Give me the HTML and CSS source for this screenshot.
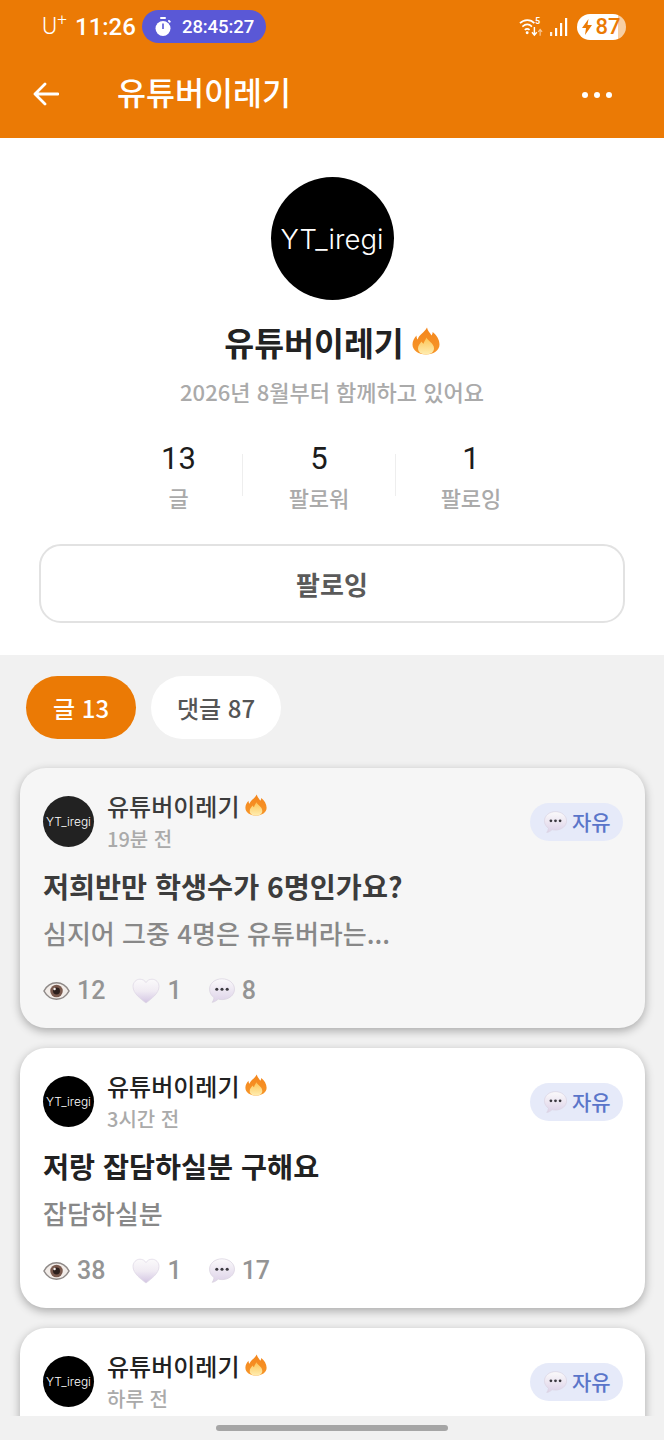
FILE: index.html
```html
<!DOCTYPE html>
<html lang="ko">
<head>
  <meta charset="UTF-8">
  <meta name="viewport" content="width=device-width, initial-scale=1.0">
  <title>유튜버이레기</title>
  <link rel="stylesheet" href="styles.css">
</head>
<body>
  <!-- icons used more than once -->
  <svg class="defs" aria-hidden="true">
    <defs>
      <linearGradient id="flameOuter" x1="0" y1="0" x2="0" y2="1">
        <stop offset="0" stop-color="#f4861c"/>
        <stop offset="1" stop-color="#f7962a"/>
      </linearGradient>
      <linearGradient id="flameInner" x1="0" y1="0" x2="0" y2="1">
        <stop offset="0" stop-color="#fcc455"/>
        <stop offset="1" stop-color="#ffedb0"/>
      </linearGradient>
      <linearGradient id="heartFill" x1="0" y1="0" x2="0" y2="1">
        <stop offset="0" stop-color="#fbfafb"/>
        <stop offset="0.5" stop-color="#f0ebf3"/>
        <stop offset="1" stop-color="#d3c5e3"/>
      </linearGradient>
      <linearGradient id="bubbleFill" x1="0" y1="0" x2="0" y2="1">
        <stop offset="0" stop-color="#fbfafb"/>
        <stop offset="1" stop-color="#ddd2e8"/>
      </linearGradient>
      <symbol id="flame" viewBox="0 0 28 28">
        <path fill="url(#flameOuter)" d="M15 .5c.5 3.500 3 5 4.500 8 .8-1 1.200-2.200 1.200-3.500C24.500 8 27.500 12.500 27.500 17.500 27.500 23.500 21.500 27.500 14 27.500S.5 23.500.5 17.500C.5 14 2.200 11 4.500 8.500c0 1.800.4 3 1.200 4C7 7.500 12 6 15 .5z"/>
        <path fill="url(#flameInner)" d="M14.500 10.500c1 3.200 7.500 5.500 7.500 11 0 3.800-3.500 6-8 6s-8-2.200-8-6c0-3.200 2.300-5 3.500-7 .5 1 1.200 1.800 2 2.300C12 14.500 13.500 12.800 14.500 10.500z"/>
      </symbol>
      <symbol id="bubble" viewBox="0.5 1.500 25 23.500">
        <path fill="url(#bubbleFill)" stroke="#d9d2df" stroke-width=".7" d="M13 2c6.600 0 12 4.300 12 10s-5.400 10-12 10c-1.300 0-2.500-.2-3.700-.5C7.800 23 6 24.300 3.500 24.600c1-1.200 1.700-2.700 1.800-4.500C2.700 18.200 1 15.300 1 12 1 6.300 6.400 2 13 2z"/>
        <circle cx="8" cy="12" r="1.500" fill="#3c3a40"/>
        <circle cx="13" cy="12" r="1.500" fill="#3c3a40"/>
        <circle cx="18" cy="12" r="1.500" fill="#3c3a40"/>
      </symbol>
      <symbol id="eye" viewBox="0 0 28 20">
        <path fill="#f2ece8" stroke="#8f8a88" stroke-width="1.600" d="M1 10C4 4.500 8.500 1.500 14 1.500S24 4.500 27 10c-3 5.500-7.500 8.500-13 8.500S4 15.500 1 10z"/>
        <circle cx="14" cy="10" r="6.500" fill="#7a5a4e"/>
        <circle cx="14" cy="10" r="3.600" fill="#2c1f1c"/>
        <circle cx="12" cy="8" r="1.300" fill="#f5f0ee"/>
      </symbol>
      <symbol id="heart" viewBox="0 0 28 26">
        <path fill="url(#heartFill)" stroke="#ddd6e4" stroke-width=".7" d="M14 25C9 21 1 15.500 1 8.500 1 4.300 4.200 1.200 8 1.200c2.500 0 4.700 1.200 6 3.400 1.300-2.200 3.500-3.400 6-3.400 3.800 0 7 3.100 7 7.300C27 15.500 19 21 14 25z"/>
      </symbol>
    </defs>
  </svg>

  <div class="page">
    <header class="appbar">
      <div class="statusbar">
        <div class="status-left">
          <span class="carrier">U<sup>+</sup></span>
          <span class="clock">11:26</span>
          <span class="timer">
            <svg class="timer-icon" viewBox="0 0 18 20"><rect x="6" y="0" width="6" height="2" rx="1" fill="#fff"/><rect x="14" y="3" width="3" height="2" rx="1" fill="#fff" transform="rotate(40 15 4)"/><circle cx="9" cy="11.500" r="7.500" fill="#fff"/><rect x="8.200" y="6.500" width="1.600" height="5.500" fill="#5a58d6"/></svg>
            28:45:27
          </span>
        </div>
        <div class="status-right">
          <svg class="wifi-icon" viewBox="0 0 26 22" fill="none" stroke="#fff"><path stroke-width="1.700" d="M1 7c4-4 11-4.500 15 0M3.500 10.500c3-2.500 7-2.700 10 0M6 14c1.500-1.300 3.500-1.300 5 0"/><circle cx="8.500" cy="17" r="1.500" fill="#fff" stroke="none"/><path stroke-width="1.500" d="M16 11v8M13.500 16.500l2.500 3 2.500-3"/><path stroke-width="1.200" opacity=".6" d="M22 20v-6M20 16l2-2.500 2 2.500"/><text class="wifi-five" x="17" y="8" fill="#fff" stroke="none">5</text></svg>
          <svg class="signal-icon" viewBox="0 0 18 20" fill="#fff"><rect x="0" y="15" width="2.200" height="4" opacity=".9"/><rect x="5" y="11" width="2.200" height="8"/><rect x="10" y="6" width="2.200" height="13"/><rect x="15" y="1" width="2.200" height="18"/></svg>
          <span class="battery">
            <svg class="bolt" viewBox="0 0 10 16"><path fill="#eb7a05" d="M6.500 0L0 9h4l-1 7 7-10H5.500z"/></svg>
            87
          </span>
        </div>
      </div>
      <div class="toolbar">
        <svg class="back" viewBox="0 0 26 24" fill="none" stroke="#fff" stroke-width="2.800" stroke-linecap="round" stroke-linejoin="round"><path d="M2 12h23M12 2L2 12l10 10"/></svg>
        <h1 class="toolbar-title">유튜버이레기</h1>
        <div class="dots"><i></i><i></i><i></i></div>
      </div>
    </header>

    <section class="profile">
      <div class="avatar avatar-big">YT_iregi</div>
      <div class="profile-name">유튜버이레기 <svg class="flame-big"><use href="#flame"/></svg></div>
      <p class="profile-since">2026년 8월부터 함께하고 있어요</p>
      <div class="stats">
        <div class="stat stat-first"><b>13</b><span>글</span></div>
        <div class="stat stat-mid"><b>5</b><span>팔로워</span></div>
        <div class="stat stat-last"><b>1</b><span>팔로잉</span></div>
      </div>
      <button class="follow-btn">팔로잉</button>
    </section>

    <main class="feed">
      <div class="tabs">
        <span class="tab tab-active">글 13</span>
        <span class="tab">댓글 87</span>
      </div>

      <article class="post post-pressed">
        <div class="post-head">
          <div class="avatar avatar-small">YT_iregi</div>
          <div class="post-meta">
            <div class="post-author">유튜버이레기 <svg class="flame-small"><use href="#flame"/></svg></div>
            <div class="post-time">19분 전</div>
          </div>
          <span class="tag"><svg class="tag-icon"><use href="#bubble"/></svg>자유</span>
        </div>
        <h2 class="post-title">저희반만 학생수가 6명인가요?</h2>
        <p class="post-body">심지어 그중 4명은 유튜버라는...</p>
        <div class="post-stats">
          <span class="count count-views"><svg class="ico-eye"><use href="#eye"/></svg>12</span>
          <span class="count count-likes"><svg class="ico-heart"><use href="#heart"/></svg>1</span>
          <span class="count"><svg class="ico-bubble"><use href="#bubble"/></svg>8</span>
        </div>
      </article>

      <article class="post">
        <div class="post-head">
          <div class="avatar avatar-small">YT_iregi</div>
          <div class="post-meta">
            <div class="post-author">유튜버이레기 <svg class="flame-small"><use href="#flame"/></svg></div>
            <div class="post-time">3시간 전</div>
          </div>
          <span class="tag"><svg class="tag-icon"><use href="#bubble"/></svg>자유</span>
        </div>
        <h2 class="post-title">저랑 잡담하실분 구해요</h2>
        <p class="post-body">잡담하실분</p>
        <div class="post-stats">
          <span class="count count-views"><svg class="ico-eye"><use href="#eye"/></svg>38</span>
          <span class="count count-likes"><svg class="ico-heart"><use href="#heart"/></svg>1</span>
          <span class="count"><svg class="ico-bubble"><use href="#bubble"/></svg>17</span>
        </div>
      </article>

      <article class="post">
        <div class="post-head">
          <div class="avatar avatar-small">YT_iregi</div>
          <div class="post-meta">
            <div class="post-author">유튜버이레기 <svg class="flame-small"><use href="#flame"/></svg></div>
            <div class="post-time">하루 전</div>
          </div>
          <span class="tag"><svg class="tag-icon"><use href="#bubble"/></svg>자유</span>
        </div>
      </article>
    </main>

    <div class="navbar"><div class="nav-handle"></div></div>
  </div>
</body>
</html>
```

FILE: styles.css
```css
* {
  box-sizing: border-box;
}

body {
  margin: 0;
  background: #f1f1f1;
  font-family: "Noto Sans CJK KR", Roboto, sans-serif;
}

.defs {
  position: absolute;
  width: 0;
  height: 0;
}

.page {
  position: relative;
  height: 1440px;
  overflow: hidden;
}

/* top orange bar */
.appbar {
  height: 138px;
  background: #eb7a05;
  color: #fff;
}

.statusbar {
  height: 50px;
  padding: 10px 38px 0 42px;
  display: flex;
  justify-content: space-between;
  align-items: flex-start;
}

.status-left {
  display: flex;
  align-items: center;
  height: 33px;
}

.carrier {
  font-family: Roboto, sans-serif;
  font-weight: 300;
  font-size: 23px;
  width: 33px;
}

.carrier sup {
  font-size: 17px;
  line-height: 0;
}

.clock {
  font-family: Roboto, sans-serif;
  font-weight: 500;
  font-size: 24px;
  width: 67px;
}

.timer {
  display: flex;
  align-items: center;
  gap: 10px;
  width: 124px;
  height: 33px;
  padding-left: 12px;
  border-radius: 17px;
  background: #5a58d6;
  font-family: Roboto, sans-serif;
  font-weight: 500;
  font-size: 18.5px;
  letter-spacing: -0.1px;
}

.timer-icon {
  width: 18px;
  height: 20px;
}

.status-right {
  display: flex;
  align-items: center;
  height: 33px;
}

.wifi-icon {
  width: 25px;
  height: 22px;
  margin-right: 6px;
}

.wifi-five {
  font-family: Roboto, sans-serif;
  font-size: 9px;
  font-weight: 700;
}

.signal-icon {
  width: 18px;
  height: 20px;
  margin-right: 9px;
}

.battery {
  display: flex;
  align-items: center;
  justify-content: center;
  gap: 3px;
  width: 49px;
  height: 26px;
  border-radius: 13px;
  background: linear-gradient(90deg, #fff 0, #fff 84%, #f7cfa3 84%);
  color: #eb7a05;
  font-family: Roboto, sans-serif;
  font-weight: 500;
  font-size: 22px;
}

.bolt {
  width: 10px;
  height: 16px;
}

.toolbar {
  height: 88px;
  padding: 0 52px 0 33px;
  display: flex;
  align-items: center;
}

.back {
  width: 26px;
  height: 24px;
}

.toolbar-title {
  margin: 0 0 4px 58px;
  font-size: 31.5px;
  font-weight: 500;
  line-height: 1;
}

.dots {
  margin-left: auto;
  margin-top: 1px;
  display: flex;
  gap: 6px;
}

.dots i {
  width: 6px;
  height: 6px;
  border-radius: 50%;
  background: #fff;
}

/* profile block */
.profile {
  height: 517px;
  background: #fff;
  padding: 39px 39px 0;
  display: flex;
  flex-direction: column;
  align-items: center;
}

.avatar {
  flex: none;
  display: flex;
  align-items: center;
  justify-content: center;
  border-radius: 50%;
  background: #000;
  color: #fff;
  font-family: Inter, sans-serif;
  font-weight: 300;
}

.avatar-big {
  width: 123px;
  height: 123px;
  font-size: 27.5px;
}

.avatar-small {
  width: 51px;
  height: 51px;
  font-size: 12px;
}

.profile-name {
  margin-top: 19px;
  display: flex;
  align-items: center;
  gap: 8px;
  height: 44px;
  font-size: 32.5px;
  font-weight: 600;
  color: #222;
}

.flame-big {
  width: 28px;
  height: 28px;
}

.profile-since {
  margin: 12px 0 0;
  height: 32px;
  line-height: 32px;
  font-size: 22px;
  font-weight: 500;
  color: #aaa;
}

.stats {
  margin-top: 47px;
  align-self: flex-start;
  margin-left: 76px;
  display: flex;
}

.stat {
  display: flex;
  flex-direction: column;
  align-items: center;
  height: 42px;
}

.stat b {
  font-family: Roboto, sans-serif;
  font-weight: 400;
  font-size: 31px;
  line-height: 34px;
  color: #1c1c1c;
  margin-top: -12px;
}

.stat span {
  font-size: 22px;
  font-weight: 500;
  line-height: 32px;
  color: #aaa;
  margin-top: 5px;
}

.stat-first {
  width: 128px;
  border-right: 1px solid #eee;
}

.stat-mid {
  width: 153px;
  border-right: 1px solid #eee;
}

.stat-last {
  width: 150px;
}

.follow-btn {
  margin-top: 48px;
  width: 586px;
  height: 79px;
  flex: none;
  border: 2px solid #e2e2e2;
  border-radius: 22px;
  background: #fff;
  font-family: inherit;
  font-size: 26px;
  font-weight: 600;
  color: #5a5a5a;
}

/* tabs and posts */
.feed {
  padding: 21px 19px 0 20px;
}

.tabs {
  display: flex;
  gap: 15px;
  padding-left: 6px;
  margin-bottom: 29px;
}

.tab {
  display: flex;
  align-items: center;
  justify-content: center;
  width: 130px;
  height: 63px;
  border-radius: 32px;
  background: #fff;
  font-size: 24px;
  font-weight: 500;
  color: #555;
}

.tab-active {
  width: 110px;
  background: #eb7a05;
  color: #fff;
}

.post {
  height: 260px;
  margin-bottom: 20px;
  padding: 28px 22px 0 23px;
  border-radius: 26px;
  background: #fff;
  box-shadow: 0 3px 10px rgba(0, 0, 0, 0.3);
}

.post-pressed {
  background: #f6f6f6;
}

.post-pressed .avatar {
  background: #222;
}

.post-pressed .post-author,
.post-pressed .post-title {
  color: #3c3c3c;
}

.post-head {
  display: flex;
  align-items: flex-start;
  height: 52px;
}

.post-meta {
  margin-left: 13px;
}

.post-author {
  display: flex;
  align-items: center;
  gap: 6px;
  height: 30px;
  margin-top: -6px;
  font-size: 24px;
  font-weight: 500;
  color: #222;
}

.flame-small {
  width: 22px;
  height: 22px;
}

.post-time {
  margin-top: 5px;
  height: 28px;
  line-height: 28px;
  font-size: 20px;
  font-weight: 500;
  color: #aaa;
}

.tag {
  margin-left: auto;
  margin-top: 7px;
  display: flex;
  align-items: center;
  gap: 5px;
  width: 93px;
  height: 38px;
  padding: 0 0 3px 14px;
  border-radius: 19px;
  background: #e6eaf9;
  font-size: 21px;
  font-weight: 500;
  color: #5a75c9;
}

.tag-icon {
  width: 23px;
  height: 22px;
  margin-top: 3px;
}

.post-title {
  margin: 19px 0 0;
  height: 38px;
  line-height: 38px;
  font-size: 28.3px;
  font-weight: 600;
  color: #222;
}

.post-body {
  margin: 9px 0 0;
  height: 38px;
  line-height: 38px;
  font-size: 26px;
  font-weight: 500;
  color: #888;
}

.post-stats {
  margin-top: 24px;
  display: flex;
  align-items: center;
  gap: 27px;
}

.count {
  display: flex;
  align-items: center;
  gap: 7px;
  font-family: Roboto, sans-serif;
  font-size: 25px;
  font-weight: 500;
  color: #949494;
}

.ico-eye {
  width: 27px;
  height: 20px;
}

.ico-heart {
  width: 28px;
  height: 26px;
}

.ico-bubble {
  width: 26px;
  height: 25px;
}

/* android gesture bar */
.navbar {
  position: absolute;
  left: 0;
  right: 0;
  bottom: 0;
  height: 24px;
  background: #f1f1f1;
  display: flex;
  justify-content: center;
  padding-top: 9px;
}

.nav-handle {
  width: 232px;
  height: 6px;
  border-radius: 3px;
  background: #a6a6a6;
}
```
